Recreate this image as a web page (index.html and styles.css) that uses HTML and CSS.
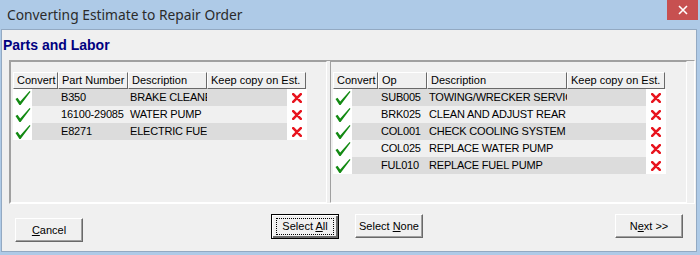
FILE: index.html
```html
<!DOCTYPE html>
<html lang="en">
  <head>
    <meta charset="UTF-8" />
    <title>Converting Estimate to Repair Order</title>
    <link rel="stylesheet" href="styles.css">
  </head>
  <body>
    <svg class="defs" width="0" height="0">
      <symbol id="ok" viewBox="0 0 16 16">
        <path d="M0.5 9 L2.5 7.8 L5.2 11.6 L14.6 1 L15.5 1.8 L5.6 15 L4.4 15 Z" fill="#138a13" />
      </symbol>
      <symbol id="no" viewBox="0 0 10 10">
        <path d="M1.2 1.2 L8.8 8.8 M8.8 1.2 L1.2 8.8" stroke="#e8141e" stroke-width="2.6" stroke-linecap="round" fill="none" />
      </symbol>
    </svg>

    <div class="window">
      <div class="titlebar">
        <span class="title">Converting Estimate to Repair Order</span>
        <span class="close">
          <svg width="10" height="10" viewBox="0 0 10 10"><path d="M1 1 L9 9 M9 1 L1 9" stroke="#fff" stroke-width="1.6" /></svg>
        </span>
      </div>

      <div class="client">
        <div class="heading">Parts and Labor</div>

        <div class="frame">
          <!-- parts -->
          <div class="list list-parts">
            <div class="head">
              <div class="hc w-conv">Convert</div>
              <div class="hc w-num">Part Number</div>
              <div class="hc w-pdesc">Description</div>
              <div class="hc w-pkeep">Keep copy on Est.</div>
            </div>
            <div class="row odd">
              <div class="chk"><svg><use href="#ok" /></svg></div>
              <div class="band"><span class="sp"></span><span class="cell w-num">B350</span><span class="cell desc w-pdesc">BRAKE CLEANER</span></div>
              <div class="del"><svg><use href="#no" /></svg></div>
            </div>
            <div class="row">
              <div class="chk"><svg><use href="#ok" /></svg></div>
              <div class="band"><span class="sp"></span><span class="cell w-num">16100-29085</span><span class="cell desc w-pdesc">WATER PUMP</span></div>
              <div class="del"><svg><use href="#no" /></svg></div>
            </div>
            <div class="row odd">
              <div class="chk"><svg><use href="#ok" /></svg></div>
              <div class="band"><span class="sp"></span><span class="cell w-num">E8271</span><span class="cell desc w-pdesc">ELECTRIC FUEL PUMP</span></div>
              <div class="del"><svg><use href="#no" /></svg></div>
            </div>
          </div>

          <!-- labor -->
          <div class="list list-labor">
            <div class="head">
              <div class="hc w-conv">Convert</div>
              <div class="hc w-op">Op</div>
              <div class="hc w-ldesc">Description</div>
              <div class="hc w-lkeep">Keep copy on Est.</div>
            </div>
            <div class="row odd">
              <div class="chk"><svg><use href="#ok" /></svg></div>
              <div class="band"><span class="sp"></span><span class="cell w-op">SUB005</span><span class="cell desc w-ldesc">TOWING/WRECKER SERVICE</span></div>
              <div class="del"><svg><use href="#no" /></svg></div>
            </div>
            <div class="row">
              <div class="chk"><svg><use href="#ok" /></svg></div>
              <div class="band"><span class="sp"></span><span class="cell w-op">BRK025</span><span class="cell desc w-ldesc">CLEAN AND ADJUST REAR BRAKES</span></div>
              <div class="del"><svg><use href="#no" /></svg></div>
            </div>
            <div class="row odd">
              <div class="chk"><svg><use href="#ok" /></svg></div>
              <div class="band"><span class="sp"></span><span class="cell w-op">COL001</span><span class="cell desc w-ldesc">CHECK COOLING SYSTEM .</span></div>
              <div class="del"><svg><use href="#no" /></svg></div>
            </div>
            <div class="row">
              <div class="chk"><svg><use href="#ok" /></svg></div>
              <div class="band"><span class="sp"></span><span class="cell w-op">COL025</span><span class="cell desc w-ldesc">REPLACE WATER PUMP</span></div>
              <div class="del"><svg><use href="#no" /></svg></div>
            </div>
            <div class="row odd">
              <div class="chk"><svg><use href="#ok" /></svg></div>
              <div class="band"><span class="sp"></span><span class="cell w-op">FUL010</span><span class="cell desc w-ldesc">REPLACE FUEL PUMP</span></div>
              <div class="del"><svg><use href="#no" /></svg></div>
            </div>
          </div>
        </div>

        <div class="buttons">
          <button class="btn btn-cancel"><u>C</u>ancel</button>
          <button class="btn btn-all"><span class="focus">Select <u>A</u>ll</span></button>
          <button class="btn btn-none">Select <u>N</u>one</button>
          <button class="btn btn-next">N<u>e</u>xt &gt;&gt;</button>
        </div>
      </div>
    </div>
  </body>
</html>
```

FILE: styles.css
```css
body {
  margin: 0;
  font-family: "Liberation Sans", Arial, sans-serif;
  font-size: 11px;
}

.defs {
  position: absolute;
}

.window {
  width: 700px;
  height: 255px;
  background-color: #aecae7;
  display: flex;
  flex-direction: column;
}

.titlebar {
  height: 29px;
  display: flex;
  justify-content: space-between;
  align-items: flex-start;
}

.title {
  padding: 5px 0 0 7px;
  font-family: "Noto Sans", sans-serif;
  font-size: 13.8px;
  line-height: 19px;
  color: #2b2b2b;
}

.close {
  width: 31px;
  height: 20px;
  margin-right: 2px;
  background-color: #c75050;
  display: flex;
  justify-content: center;
  align-items: center;
}

.client {
  flex: 1;
  margin: 0 3px 3px 1px;
  border: 1px solid #93a9c2;
  background-color: #f0f0f0;
  display: flex;
  flex-direction: column;
}

.heading {
  margin: 7px 0 0 1px;
  font-size: 14px;
  line-height: 16px;
  font-weight: bold;
  color: #000080;
}

.frame {
  margin: 7px 0 0 7px;
  width: 684px;
  height: 142px;
  border: 1px solid;
  border-color: #a0a0a0 #ffffff #ffffff #a0a0a0;
  display: flex;
  gap: 3px;
}

.list {
  border: 1px solid;
  border-color: #a0a0a0 #ffffff #ffffff #a0a0a0;
  padding: 10px 0 0 2px;
  box-sizing: border-box;
  height: 142px;
}

.list-parts {
  width: 317px;
}

.list-labor {
  width: 357px;
}

.head {
  display: flex;
  height: 17px;
}

.hc {
  box-sizing: border-box;
  height: 17px;
  line-height: 15px;
  padding-left: 3px;
  background-color: #f0f0f0;
  border: 1px solid;
  border-color: #ffffff #696969 #696969 #ffffff;
  white-space: nowrap;
  overflow: hidden;
}

.w-conv { width: 45px; }
.w-num { width: 70px; }
.w-pdesc { width: 79px; }
.w-pkeep { width: 99px; }
.w-op { width: 49px; }
.w-ldesc { width: 140px; }
.w-lkeep { width: 98px; }

.row {
  display: flex;
  height: 17px;
  line-height: 17px;
}

.chk {
  width: 19px;
  background-color: #ffffff;
}

.chk svg {
  width: 16px;
  height: 16px;
  margin: 1px 0 0 2px;
}

.band {
  display: flex;
  background-color: #f0f0f0;
  color: #000;
  white-space: nowrap;
  overflow: hidden;
  letter-spacing: -0.2px;
}

.row.odd .band {
  background-color: #dcdcdc;
}

.list-parts .band {
  width: 255px;
}

.list-labor .band {
  width: 294px;
}

.sp {
  width: 26px;
  flex-shrink: 0;
}

.cell {
  flex-shrink: 0;
  padding-left: 3px;
  box-sizing: border-box;
  overflow: hidden;
}

.cell.desc {
  padding-left: 2px;
}

.del {
  width: 20px;
  background-color: #ffffff;
}

.del svg {
  width: 10px;
  height: 10px;
  margin: 4px 0 0 5px;
}

.buttons {
  display: flex;
  align-items: flex-start;
  margin-top: 10px;
}

.btn {
  width: 68px;
  height: 24px;
  padding: 0;
  font-family: "Liberation Sans", Arial, sans-serif;
  font-size: 11px;
  color: #000;
  background-color: #f0f0f0;
  border: 1px solid;
  border-color: #ffffff #696969 #696969 #ffffff;
  box-shadow: inset -1px -1px 0 #a0a0a0;
}

.btn-cancel {
  margin: 4px 0 0 13px;
}

.btn-all {
  margin-left: 188px;
  height: 25px;
  border: 1px solid #000;
  box-shadow: inset 1px 1px 0 #fff, inset -2px -2px 0 #696969;
  display: flex;
  justify-content: center;
  align-items: center;
}

.focus {
  display: block;
  width: 56px;
  height: 15px;
  line-height: 15px;
  border: 1px dotted #000;
}

.btn-none {
  margin-left: 16px;
}

.btn-next {
  margin-left: 192px;
}
```
